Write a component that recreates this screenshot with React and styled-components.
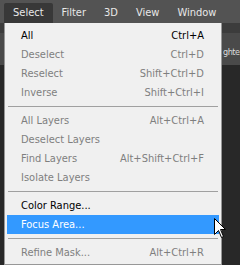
import React from "react";
import styled, { createGlobalStyle } from "styled-components";

const Global = createGlobalStyle`
  html, body { margin: 0; padding: 0; background: #282828; }
  body { width: 240px; height: 265px; overflow: hidden; }
  #root { width: 240px; height: 265px; }
`;

const FONT = `"DejaVu Sans Condensed", "DejaVu Sans", Tahoma, sans-serif`;

const Screen = styled.div`
  position: relative;
  width: 240px;
  height: 265px;
  display: flex;
  flex-direction: column;
  background: #282828;
  font-family: ${FONT};
  overflow: hidden;
`;

const MenuBar = styled.div`
  height: 23px;
  display: flex;
  align-items: flex-end;
  padding-left: 4px;
  background: #535353;
  flex: none;
`;

const BarItem = styled.div`
  height: 19px;
  padding: 0 9px 1px;
  display: flex;
  align-items: center;
  font-size: 11px;
  color: #e8e8e8;
  white-space: nowrap;
  border-radius: 2px 2px 0 0;
  background: ${(p) => (p.$open ? "#383838" : "transparent")};
`;

const OptionsBar = styled.div`
  height: 42px;
  flex: none;
  background: #4a4a4a;
  border-top: 10px solid #3c3c3c;
  box-sizing: border-box;
  display: flex;
  align-items: center;
  padding-left: 223px;
  font-size: 9px;
  color: #dcdcdc;
`;

const OptionLabel = styled.span`
  white-space: nowrap;
  letter-spacing: -0.5px;
  margin-top: 6px;
`;

const Workspace = styled.div`
  flex: 1;
  background: #282828;
`;

const Menu = styled.div`
  position: absolute;
  left: 4px;
  top: 23px;
  width: 218px;
  box-sizing: border-box;
  background: #f0f0f0;
  border: 1px solid #979797;
  border-top: none;
  padding: 3px 2px 2px;
  display: flex;
  flex-direction: column;
`;

const Item = styled.div`
  height: 19px;
  display: flex;
  align-items: center;
  justify-content: space-between;
  padding: 0 15px 0 14px;
  font-size: 11px;
  white-space: nowrap;
  color: ${(p) => (p.$active ? "#ffffff" : p.$enabled ? "#000000" : "#7f7f7f")};
  background: ${(p) => (p.$active ? "#3399ff" : "transparent")};
`;

const Shortcut = styled.span`
  color: inherit;
`;

const Separator = styled.div`
  height: 9px;
  display: flex;
  align-items: center;
  padding: 0 1px;
  &::after {
    content: "";
    flex: 1;
    height: 1px;
    background: #a0a0a0;
  }
`;

const Cursor = styled.svg`
  position: absolute;
  left: 214px;
  top: 218px;
`;

const groups = [
  [
    { label: "All", key: "Ctrl+A", enabled: true },
    { label: "Deselect", key: "Ctrl+D" },
    { label: "Reselect", key: "Shift+Ctrl+D" },
    { label: "Inverse", key: "Shift+Ctrl+I" },
  ],
  [
    { label: "All Layers", key: "Alt+Ctrl+A" },
    { label: "Deselect Layers", key: "" },
    { label: "Find Layers", key: "Alt+Shift+Ctrl+F" },
    { label: "Isolate Layers", key: "" },
  ],
  [
    { label: "Color Range...", key: "", enabled: true },
    { label: "Focus Area...", key: "", enabled: true, active: true },
  ],
  [{ label: "Refine Mask...", key: "Alt+Ctrl+R" }],
];

export default function App() {
  return (
    <Screen>
      <Global />
      <MenuBar>
        <BarItem $open>Select</BarItem>
        <BarItem>Filter</BarItem>
        <BarItem>3D</BarItem>
        <BarItem>View</BarItem>
        <BarItem>Window</BarItem>
      </MenuBar>
      <OptionsBar>
        <OptionLabel>ghte</OptionLabel>
      </OptionsBar>
      <Workspace />
      <Menu>
        {groups.map((g, gi) => (
          <React.Fragment key={gi}>
            {gi > 0 && <Separator />}
            {g.map((it) => (
              <Item key={it.label} $enabled={it.enabled} $active={it.active}>
                <span>{it.label}</span>
                <Shortcut>{it.key}</Shortcut>
              </Item>
            ))}
          </React.Fragment>
        ))}
      </Menu>
      <Cursor width="13" height="21" viewBox="0 0 13 21">
        <path
          d="M0.5 0.5 L0.5 16.5 L4.5 12.5 L7.5 19.5 L9.5 18.5 L6.5 11.5 L11.5 11.5 Z"
          fill="#ffffff"
          stroke="#000000"
          strokeWidth="1"
        />
      </Cursor>
    </Screen>
  );
}
